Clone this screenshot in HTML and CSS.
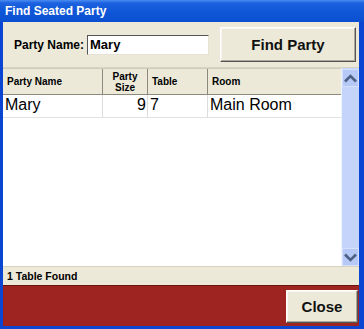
FILE: index.html
```html
<!DOCTYPE html>
<html>
<head>
<meta charset="utf-8">
<link rel="stylesheet" href="styles.css">
</head>
<body>
<div class="window">
  <div class="titlebar">Find Seated Party</div>
  <div class="searchbar">
    <label class="label">Party Name:</label>
    <div class="input">Mary</div>
    <button class="btn find">Find Party</button>
  </div>
  <div class="grid">
    <div class="table">
      <div class="row head">
        <div class="cell c1">Party Name</div>
        <div class="cell c2 center">Party<br>Size</div>
        <div class="cell c3">Table</div>
        <div class="cell c4">Room</div>
      </div>
      <div class="row data">
        <div class="cell c1">Mary</div>
        <div class="cell c2 right">9</div>
        <div class="cell c3">7</div>
        <div class="cell c4">Main Room</div>
      </div>
    </div>
    <div class="scrollbar">
      <div class="sbtn">
        <svg width="13" height="9" viewBox="0 0 13 9"><path d="M1 7.5 L6.5 2 L12 7.5" fill="none" stroke="#4d6185" stroke-width="2.6"/></svg>
      </div>
      <div class="track"></div>
      <div class="sbtn">
        <svg width="13" height="9" viewBox="0 0 13 9"><path d="M1 1.5 L6.5 7 L12 1.5" fill="none" stroke="#4d6185" stroke-width="2.6"/></svg>
      </div>
    </div>
  </div>
  <div class="status">1 Table Found</div>
  <div class="footer">
    <button class="btn close">Close</button>
  </div>
</div>
</body>
</html>
```
FILE: styles.css
```css
html, body {
  margin: 0;
  padding: 0;
  background: #ffffff;
}
.window {
  width: 364px;
  height: 329px;
  box-sizing: border-box;
  background: #0a46d2;
  padding: 0 5px 3px 3px;
  display: flex;
  flex-direction: column;
  font-family: "Liberation Sans", Arial, sans-serif;
  color: #000;
}
.titlebar {
  height: 22px;
  margin: 0 -5px 0 -3px;
  padding-left: 5px;
  background: linear-gradient(#4a8cf2 0, #1c62e0 3px, #0f57d8 50%, #0b4fd0 100%);
  color: #fff;
  font-weight: bold;
  font-size: 12px;
  line-height: 22px;
  flex: none;
}
.searchbar {
  height: 46px;
  background: #ece9d8;
  display: flex;
  align-items: center;
  flex: none;
  border-bottom: 1px solid #d8d4c4;
  box-sizing: border-box;
}
.label {
  font-weight: bold;
  font-size: 12px;
  margin-left: 11px;
  margin-right: 3px;
}
.input {
  width: 122px;
  height: 20px;
  box-sizing: border-box;
  background: #fff;
  border-top: 1px solid #555;
  border-left: 1px solid #555;
  border-right: 1px solid #e6e3d6;
  border-bottom: 1px solid #e6e3d6;
  font-weight: bold;
  font-size: 13px;
  line-height: 18px;
  padding-left: 2px;
}
.btn {
  font-family: "Liberation Sans", Arial, sans-serif;
  font-weight: bold;
  background: #ece9d8;
  border: 1px solid #fff;
  border-right-color: #555;
  border-bottom-color: #555;
  box-shadow: inset -1px -1px 0 #aca899, inset 1px 1px 0 #f8f6ee;
  padding: 0;
  color: #111;
}
.find {
  margin-left: 11px;
  width: 136px;
  height: 35px;
  font-size: 15px;
}
.grid {
  height: 198px;
  display: flex;
  background: #fff;
  flex: none;
}
.table {
  flex: 1;
}
.row {
  display: flex;
}
.head {
  height: 27px;
  background: #ece9d8;
  font-weight: bold;
  font-size: 10px;
  box-sizing: border-box;
  border-bottom: 1px solid #8c8a7e;
  border-top: 1px solid #cfccbd;
}
.head .cell {
  display: flex;
  align-items: center;
  padding-left: 4px;
  line-height: 11px;
  border-right: 1px solid #8c8a7e;
}
.head .center {
  justify-content: center;
  text-align: center;
  padding-left: 0;
}
.data {
  height: 23px;
  font-size: 16px;
  box-sizing: border-box;
  border-bottom: 1px solid #e2e2e2;
}
.data .cell {
  border-right: 1px solid #dcdcdc;
  line-height: 20px;
  padding-left: 2px;
}
.cell {
  box-sizing: border-box;
  white-space: nowrap;
}
.data .right {
  text-align: right;
  padding-left: 0;
  padding-right: 1px;
}
.c1 { width: 100px; }
.c2 { width: 45px; }
.c3 { width: 60px; }
.c4 { width: 133px; border-right: none !important; }
.scrollbar {
  width: 18px;
  background: #c4d4fb;
  display: flex;
  flex-direction: column;
  padding-top: 1px;
  box-sizing: border-box;
  border-left: 1px solid #eef2fd;
}
.sbtn {
  height: 18px;
  background: #b6c9f6;
  border: 1px solid #d5e0fc;
  box-sizing: border-box;
  display: flex;
  align-items: center;
  justify-content: center;
  flex: none;
}
.track {
  flex: 1;
}
.status {
  height: 19px;
  background: #ece9d8;
  border-top: 1px solid #d6d2c2;
  box-sizing: border-box;
  font-weight: bold;
  font-size: 10.5px;
  line-height: 18px;
  padding-left: 4px;
  flex: none;
}
.footer {
  flex: 1;
  background: #9d2420;
  border-top: 1px solid #6e1410;
  display: flex;
  justify-content: flex-end;
  align-items: center;
  padding-right: 1px;
}
.close {
  width: 72px;
  height: 33px;
  font-size: 15px;
  margin-top: 1px;
}
```
